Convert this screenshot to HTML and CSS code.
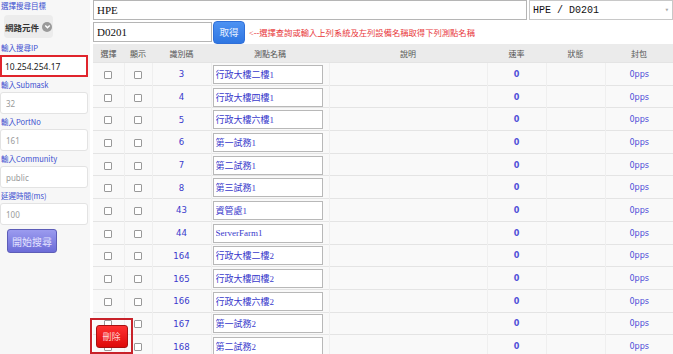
FILE: index.html
```html
<!DOCTYPE html>
<html lang="zh-Hant">
<head>
    <meta charset="UTF-8">
    <meta name="viewport" content="width=device-width, initial-scale=1.0">
    <title>測點搜尋</title>
    <link rel="stylesheet" href="styles.css">
</head>
<body>
    <div class="sidebar">
        <div class="label">選擇搜尋目標</div>
        <div class="target-btn">網路元件 <span class="chev"><svg width="9" height="9" viewBox="0 0 10 10"><path d="M2.5 4 L5 6.5 L7.5 4" fill="none" stroke="#fff" stroke-width="1.6"/></svg></span></div>
        <div class="label">輸入搜尋IP</div>
        <input class="side-input active" type="text" value="10.254.254.17">
        <div class="label">輸入Submask</div>
        <input class="side-input" type="text" placeholder="32">
        <div class="label">輸入PortNo</div>
        <input class="side-input" type="text" placeholder="161">
        <div class="label">輸入Community</div>
        <input class="side-input" type="text" placeholder="public">
        <div class="label">延遲時間(ms)</div>
        <input class="side-input" type="text" placeholder="100">
        <button class="search-btn">開始搜尋</button>
    </div>
    <div class="main">
        <div class="top-row">
            <input class="sys-input" type="text" value="HPE">
            <div class="sys-select">HPE / D0201<span class="arrow">&#9662;</span></div>
        </div>
        <div class="dev-row">
            <input class="dev-input" type="text" value="D0201">
            <button class="get-btn">取得</button>
            <span class="hint">&lt;--選擇查詢或輸入上列系統及左列設備名稱取得下列測點名稱</span>
        </div>
        <table class="points">
            <thead>
                <tr>
                    <th class="c-sel">選擇</th>
                    <th class="c-show">顯示</th>
                    <th class="c-id">識別碼</th>
                    <th class="c-name">測點名稱</th>
                    <th class="c-desc">說明</th>
                    <th class="c-rate">速率</th>
                    <th class="c-state">狀態</th>
                    <th class="c-pkt">封包</th>
                </tr>
            </thead>
            <tbody id="rows"></tbody>
        </table>
        <div class="del-wrap"><button class="del-btn">刪除</button></div>
    </div>
    <script>
        const points = [
            [3, "行政大樓二樓1"], [4, "行政大樓四樓1"], [5, "行政大樓六樓1"],
            [6, "第一試務1"], [7, "第二試務1"], [8, "第三試務1"],
            [43, "資管處1"], [44, "ServerFarm1"], [164, "行政大樓二樓2"],
            [165, "行政大樓四樓2"], [166, "行政大樓六樓2"], [167, "第一試務2"],
            [168, "第二試務2"]
        ];
        const body = document.getElementById("rows");
        points.forEach(function (p) {
            const tr = document.createElement("tr");
            tr.innerHTML =
                '<td><span class="box"></span></td>' +
                '<td><span class="box"></span></td>' +
                '<td class="num">' + p[0] + '</td>' +
                '<td class="name-cell"><input class="name-input" type="text" value="' + p[1] + '"></td>' +
                '<td></td>' +
                '<td class="rate">0</td>' +
                '<td></td>' +
                '<td class="pkt">0pps</td>';
            body.appendChild(tr);
        });
    </script>
</body>
</html>
```

FILE: styles.css
```css
html, body {
    margin: 0;
    height: 100%;
    overflow: hidden;
}
body {
    display: flex;
    background: #ffffff;
    font-family: "Noto Sans CJK TC", "Noto Sans", sans-serif;
}
.sidebar {
    width: 88px;
    padding-right: 2px;
    background: #f7f7f7;
    display: flex;
    flex-direction: column;
    align-items: flex-start;
}
.label {
    height: 15px;
    line-height: 15px;
    font-size: 7.5px;
    color: #3b4fd0;
    padding-left: 1px;
    white-space: nowrap;
}
.sidebar .label:first-child {
    height: 13px;
    line-height: 11px;
}
.target-btn {
    margin: 2px 0 2px 4px;
    width: 49px;
    height: 23px;
    box-sizing: border-box;
    background: #ececec;
    border-radius: 4px;
    display: flex;
    align-items: center;
    justify-content: center;
    gap: 3px;
    font-size: 8.5px;
    font-weight: bold;
    color: #333;
    white-space: nowrap;
}
.chev {
    flex: none;
    width: 10px;
    height: 10px;
    border-radius: 50%;
    background: #9a9a9a;
    display: flex;
    align-items: center;
    justify-content: center;
}
.side-input {
    width: 88px;
    height: 22px;
    box-sizing: border-box;
    border: 1px solid #e3e3e3;
    border-radius: 3px;
    background: #fff;
    font-family: "Noto Sans", sans-serif;
    font-size: 8px;
    color: #222;
    padding: 0 5px;
    margin: 0;
    outline: none;
}
.side-input::placeholder {
    color: #9a9a9a;
}
.side-input.active {
    border: 2px solid #e0242c;
    border-radius: 0;
    padding-left: 3px;
    font-size: 8.5px;
}
.search-btn {
    margin: 4px 0 0 7px;
    width: 50px;
    height: 24px;
    border: 1px solid #5d5db8;
    border-radius: 3px;
    background: linear-gradient(#9b9bef, #6c6cd8);
    color: #e2e2ff;
    font-family: "Noto Sans CJK TC", sans-serif;
    font-size: 10px;
    padding: 0;
}
.main {
    flex: 1;
    margin-left: 3px;
    position: relative;
    font-family: "Liberation Serif", "Noto Sans CJK TC", serif;
}
.top-row {
    display: flex;
    gap: 2px;
    height: 20px;
}
.sys-input {
    width: 434px;
    height: 20px;
    box-sizing: border-box;
    border: 1px solid #b5b5b5;
    margin: 0;
    padding: 0 3px;
    font-family: "Liberation Serif", serif;
    font-size: 11px;
    color: #111;
    outline: none;
}
.sys-select {
    flex: 1;
    height: 20px;
    box-sizing: border-box;
    border: 1px solid #c8c8c8;
    display: flex;
    align-items: center;
    justify-content: space-between;
    padding: 0 3px;
    font-family: "Liberation Mono", monospace;
    font-size: 10px;
    color: #111;
}
.arrow {
    font-size: 7px;
    color: #aaa;
}
.dev-row {
    display: flex;
    align-items: center;
    height: 24px;
}
.dev-input {
    width: 119px;
    height: 20px;
    box-sizing: border-box;
    border: 1px solid #b5b5b5;
    margin: 0;
    padding: 0 3px;
    font-family: "Liberation Serif", serif;
    font-size: 11px;
    color: #111;
    outline: none;
}
.get-btn {
    margin: 0 4px 0 1px;
    width: 32px;
    height: 23px;
    border: 1px solid #2f6fd8;
    border-radius: 4px;
    background: linear-gradient(#4d92f2, #2f76e2);
    color: #e8f0ff;
    font-family: "Noto Sans CJK TC", sans-serif;
    font-size: 9.5px;
    padding: 0;
}
.hint {
    font-size: 8.3px;
    color: #e8383c;
    white-space: nowrap;
}
.points {
    margin-top: 0;
    width: 100%;
    border-collapse: collapse;
    table-layout: fixed;
}
.points th {
    height: 18px;
    background: #ebebeb;
    font-weight: normal;
    font-size: 8px;
    color: #555;
    padding: 0;
    font-family: "Liberation Serif", "Noto Sans CJK TC", serif;
}
.points td {
    height: 22.7px;
    padding: 0;
    background: #f9f9f9;
    border-top: 1px solid #e4e4e4;
    border-left: 1px solid #efefef;
    text-align: center;
    box-sizing: border-box;
}
.points td:first-child {
    border-left: none;
}
.c-sel { width: 31px; }
.c-show { width: 28px; }
.c-id { width: 59px; }
.c-name { width: 118px; }
.c-desc { width: 158px; }
.c-rate { width: 59px; }
.c-state { width: 59px; }
.box {
    display: inline-block;
    width: 6px;
    height: 6px;
    border: 1px solid #999;
    border-radius: 1px;
    background: #fff;
}
.num {
    color: #3a3acc;
    font-family: "DejaVu Sans", sans-serif;
    font-stretch: condensed;
    font-size: 9.5px;
}
.name-cell {
    text-align: left !important;
}
.name-input {
    margin-left: 1px;
    width: 110px;
    height: 19px;
    box-sizing: border-box;
    border: 1px solid #b8b8b8;
    padding: 0 2px;
    font-family: "Liberation Serif", "Noto Sans CJK TC", serif;
    font-size: 9px;
    color: #3a3acc;
    background: #fff;
    outline: none;
}
.rate, .pkt {
    color: #5050d8;
    font-family: "DejaVu Sans", sans-serif;
    font-stretch: condensed;
    font-size: 9px;
    font-weight: bold;
}
.pkt {
    font-weight: normal;
}
.del-wrap {
    position: absolute;
    left: -3px;
    top: 318px;
    width: 43px;
    height: 36px;
    border: 2px solid #c8222a;
    box-sizing: border-box;
    display: flex;
    align-items: center;
    justify-content: center;
}
.del-btn {
    width: 32px;
    height: 23px;
    border: 1px solid #a81010;
    border-radius: 3px;
    background: linear-gradient(#ff3030, #dd0a0a);
    color: #ffd6d6;
    font-family: "Noto Sans CJK TC", sans-serif;
    font-size: 9px;
    padding: 0;
}
```
